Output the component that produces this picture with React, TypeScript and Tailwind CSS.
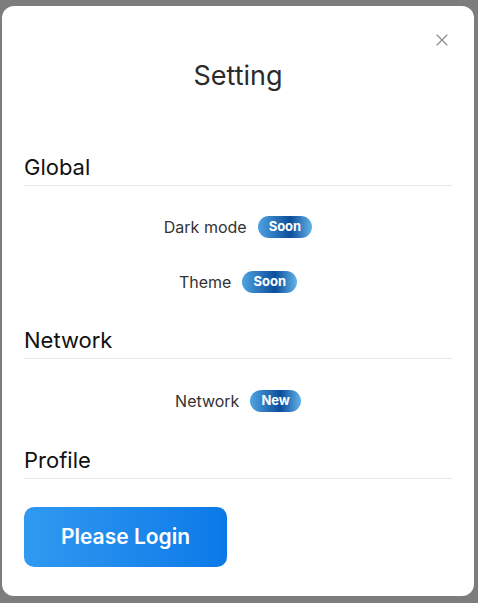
import React from "react";
import { X } from "lucide-react";

type Row = { label: string; badge: string };

const sections: { title: string; gap: string; first: string; rows: Row[] }[] = [
  { title: "Global", gap: "", first: "mt-[30px]", rows: [ { label: "Dark mode", badge: "Soon" }, { label: "Theme", badge: "Soon" } ] },
  { title: "Network", gap: "mt-[33px]", first: "mt-[31px]", rows: [ { label: "Network", badge: "New" } ] },
  { title: "Profile", gap: "mt-[34px]", first: "", rows: [] },
];

function Badge({ text }: { text: string }) {
  return (
    <span className="inline-flex h-[22px] items-center rounded-full bg-gradient-to-r from-[#4fa3e2] via-[#0b4d9b] via-60% to-[#63b5e8] px-[11px] text-[13px] font-bold text-white">
      {text}
    </span>
  );
}

export default function App() {
  return (
    <div
      className="flex h-[603px] w-[478px] bg-[#7d7d7d] pt-[6px] pl-[2px]"
      style={{ fontFamily: "Inter, 'Noto Sans', sans-serif" }}
    >
      <div className="relative flex h-[590px] w-[472px] flex-col rounded-[12px] bg-white px-[22px] pt-[54px]">
        {/* CLOSE */}
        <button className="absolute right-[22px] top-[24px] text-[#8a8a8a]">
          <X size={20} strokeWidth={1.4} />
        </button>

        {/* TITLE */}
        <h2 className="text-center text-[27px] leading-[32px] text-[#2b2b2b]">Setting</h2>

        <div className="mt-[61px] flex flex-col">
          {sections.map((section) => (
            <div key={section.title} className={section.gap}>
              <h3 className="border-b border-[#e8e8e8] pb-[4px] text-[22px] leading-[28px] text-[#111]">
                {section.title}
              </h3>
              {section.rows.map((row, j) => (
                <div
                  key={row.label}
                  className={`flex h-[22px] items-center justify-center gap-[11px] ${j === 0 ? section.first : "mt-[33px]"}`}
                >
                  <span className="text-[16px] leading-[22px] text-[#333]">{row.label}</span>
                  <Badge text={row.badge} />
                </div>
              ))}
            </div>
          ))}
        </div>

        {/* LOGIN */}
        <button className="mt-[28px] h-[60px] w-[203px] rounded-[10px] bg-gradient-to-r from-[#3099f0] to-[#0a79e8] text-[21px] font-semibold text-white">
          Please Login
        </button>
      </div>
    </div>
  );
}
